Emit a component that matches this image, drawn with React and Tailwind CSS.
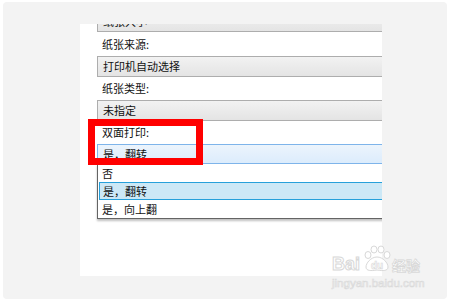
import React from 'react'

const font = { fontFamily: '"Noto Sans CJK SC", "Liberation Sans", sans-serif' }

function Combo({ text, focused }) {
  return (
    <div
      className={
        focused
          ? 'h-[20px] flex items-center pl-[5px] border border-[#7eb4ea] bg-gradient-to-b from-[#ecf4fc] to-[#dcecfc] text-[11px] text-[#111]'
          : 'h-[21px] flex items-center pl-[5px] border border-[#adadad] bg-gradient-to-b from-[#f2f2f2] to-[#e4e4e4] text-[11px] text-[#111]'
      }
    >
      {text}
    </div>
  )
}

function Label({ text, h = 'h-[24px]' }) {
  return (
    <div className={`${h} flex items-center pl-[5px] text-[11px] text-[#111]`}>{text}</div>
  )
}

export default function App() {
  return (
    <div className="w-[450px] h-[300px] bg-white relative overflow-hidden" style={font}>
      <div className="absolute left-[3px] top-[2px] w-[444px] h-[297px] rounded-[4px] bg-[#f3f3f3]" />
      <div className="absolute left-[80px] top-[24px] w-[302px] h-[252px] bg-white overflow-hidden">
        <div className="w-[330px] pl-[17px] -mt-[13px]">
          <div className="h-[21px] flex items-start pt-[3px] pl-[5px] border border-[#adadad] bg-gradient-to-b from-[#f2f2f2] to-[#e4e4e4] text-[11px] leading-[12px] text-[#111]">
            纸张大小
          </div>
          <Label text="纸张来源:" />
          <Combo text="打印机自动选择" />
          <Label text="纸张类型:" h="h-[23px]" />
          <Combo text="未指定" />
          <Label text="双面打印:" h="h-[23px]" />
          <Combo text="是，翻转" focused />
          <div className="border-l border-b border-[#646464] shadow-[0_2px_2px_rgba(0,0,0,0.25)] bg-white text-[11px] text-[#111]">
            <div className="h-[18px] flex items-center pl-[4px]">否</div>
            <div className="h-[18px] flex items-center pl-[3px] ml-[1px] border-y border-l border-[#26a0da] bg-[#cce8f6]">是，翻转</div>
            <div className="h-[18px] flex items-center pl-[4px]">是，向上翻</div>
          </div>
        </div>
      </div>

      <div className="absolute left-[88px] top-[119px] w-[115px] h-[46px] border-[7px] border-[#ff0000]" />

      <div className="absolute left-[332px] top-[245px] w-[95px] h-[46px] select-none">
        <div className="flex items-end h-[28px] w-[95px]">
          <span
            className="w-[30px] shrink-0 text-[18px] font-bold leading-none text-white"
            style={{ fontFamily: '"Liberation Sans", sans-serif', WebkitTextStroke: '1px #d8d8d8' }}
          >
            Bai
          </span>
          <svg width="30" height="28" viewBox="0 0 30 28" className="shrink-0">
            <g fill="#fff" stroke="#d8d8d8" strokeWidth="1">
              <ellipse cx="6" cy="10" rx="3" ry="3.5" />
              <ellipse cx="12" cy="4.5" rx="3" ry="3.5" />
              <ellipse cx="19" cy="4.5" rx="3" ry="3.5" />
              <ellipse cx="25" cy="10" rx="3" ry="3.5" />
              <path d="M15 12 C9 12 4 18 4 22 C4 26 9 26 15 25 C21 26 26 26 26 22 C26 18 21 12 15 12 Z" />
            </g>
            <text x="15" y="24" textAnchor="middle" fontSize="10" fontWeight="bold" fill="#fff" stroke="#d8d8d8" strokeWidth="0.6" fontFamily="Liberation Sans, sans-serif">du</text>
          </svg>
          <span
            className="shrink-0 text-[14px] font-bold leading-none text-white mb-[1px]"
            style={{ WebkitTextStroke: '0.8px #d8d8d8' }}
          >
            经验
          </span>
        </div>
        <div
          className="mt-[5px] text-[11.5px] leading-none text-white whitespace-nowrap"
          style={{ fontFamily: '"Liberation Sans", sans-serif', WebkitTextStroke: '0.7px #dadada' }}
        >
          jingyan.baidu.com
        </div>
      </div>
    </div>
  )
}
